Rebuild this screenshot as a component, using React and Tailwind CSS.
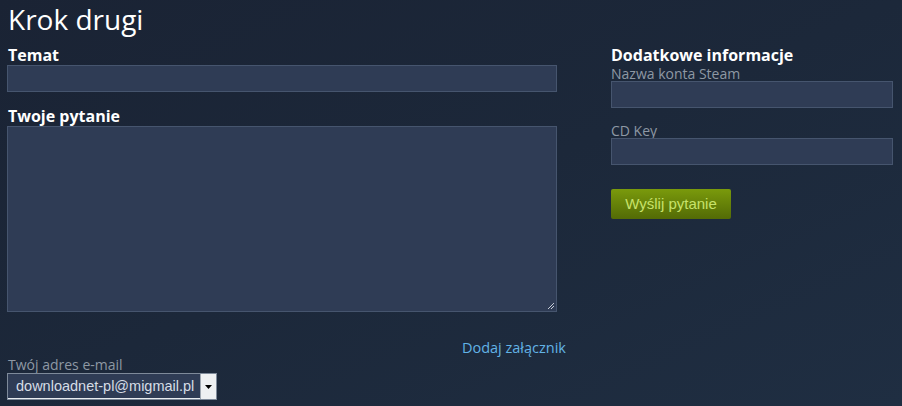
export default function App() {
  return (
    <div className="w-[902px] h-[406px] overflow-hidden bg-gradient-to-br from-[#1a2334] via-[#1c283a] to-[#1f2e42] font-['Open_Sans',sans-serif] text-white">
      <div className="pl-[7px] pt-[1px]">
        <h1 className="text-[28px] leading-[36px] font-normal text-white pl-[1px]">Krok drugi</h1>
        <div className="flex mt-[8px]">
          <div className="w-[560px] flex flex-col">
            <label className="text-[16px] leading-[20px] font-bold pl-[1px]">Temat</label>
            <div className="w-[550px] h-[27px] bg-[#2f3c55] border border-[#46556e]" />
            <label className="text-[16px] leading-[20px] font-bold pl-[1px] mt-[14px]">Twoje pytanie</label>
            <div className="relative w-[550px] h-[186px] bg-[#2f3c55] border border-[#46556e]">
              <svg className="absolute right-[1px] bottom-[1px]" width="8" height="8" viewBox="0 0 8 8">
                <path d="M7 1 L1 7 M7 4 L4 7" stroke="#c6ccd6" strokeWidth="1" />
              </svg>
            </div>
            <div className="flex justify-end mt-[27px]">
              <span className="text-[14.5px] leading-[18px] text-[#62b3e6] mr-[1px]">Dodaj załącznik</span>
            </div>
            <label className="text-[14px] leading-[16px] text-[#8e98a4] pl-[1px]">Twój adres e-mail</label>
            <div className="flex w-[210px] h-[27px] border border-[#7e8a9a]">
              <div className="flex-1 overflow-hidden whitespace-nowrap bg-[#2f3c55] text-[#d6dde6] text-[14.5px] leading-[25px] pl-[8px] font-['Liberation_Sans',sans-serif] border-b border-[#e8ecf0]">downloadnet-pl@migmail.pl</div>
              <div className="w-[16px] bg-[#eef0f2] flex items-center justify-center border-l border-[#a0a8b2]">
                <svg width="7" height="4" viewBox="0 0 7 4"><path d="M0 0 H7 L3.5 4 Z" fill="#000" /></svg>
              </div>
            </div>
          </div>
          <div className="w-[282px] ml-[44px] flex flex-col">
            <label className="text-[16px] leading-[20px] font-bold">Dodatkowe informacje</label>
            <span className="text-[14px] leading-[14px] mt-[2px] text-[#8e98a4]">Nazwa konta Steam</span>
            <div className="w-[282px] h-[27px] bg-[#2f3c55] border border-[#46556e]" />
            <span className="text-[14px] leading-[14px] text-[#8e98a4] mt-[16px]">CD Key</span>
            <div className="w-[282px] h-[27px] bg-[#2f3c55] border border-[#46556e]" />
            <button className="mt-[24px] w-[120px] h-[30px] rounded-[2px] bg-gradient-to-b from-[#7a9a0c] to-[#536b06] text-[#c7e26a] text-[15px] font-['Liberation_Sans',sans-serif]">Wyślij pytanie</button>
          </div>
        </div>
      </div>
    </div>
  );
}
